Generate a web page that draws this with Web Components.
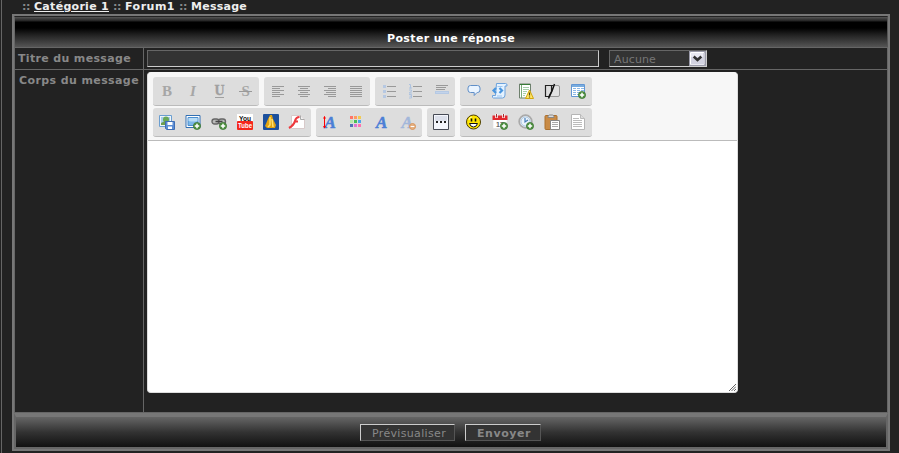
<!DOCTYPE html>
<html lang="fr"><head><meta charset="utf-8"><title>Poster une réponse</title>
<style>
html{background:#222}
body{margin:0;height:453px;overflow:hidden;background:#222;font:11px/14px "DejaVu Sans",Verdana,sans-serif;color:#888}
</style></head><body>
<forum-page></forum-page>
<script>
const define=(name,html,setup)=>customElements.define(name,class extends HTMLElement{
  connectedCallback(){
    if(this.shadowRoot)return;
    this.attachShadow({mode:'open'}).innerHTML=html;
    if(setup)setup.call(this,this.shadowRoot);
  }
});

/* One line of text tracked out to an exact width. */
define('fit-text',`<style>:host{display:inline-block;white-space:pre}span{display:inline-block;white-space:pre}:host(.u) span{text-decoration:underline;text-underline-offset:1px}</style><span><slot></slot></span>`,function(r){
  const w=+this.getAttribute('w'),s=r.querySelector('span'),n=this.textContent.length;
  const d=(w-s.getBoundingClientRect().width)/n;
  s.style.letterSpacing=d+'px';
  this.style.width=w+'px';
});

const serif='font-family="Liberation Serif" ';
const lines=(a,c='#999')=>a.map(([x,y,w])=>`<path d="M${x} ${y}.5h${w}" stroke="${c}"/>`).join('');
const plus=`<circle cx="12" cy="12" r="3.6" fill="#4f9140" stroke="#397431" stroke-width=".7"/><path d="M12 9.8v4.4M9.8 12h4.4" stroke="#fff" stroke-width="1.5"/>`;
const bigA=(x,o=1)=>`<text x="${x}" y="13.5" ${serif}font-size="17" font-weight="bold" font-style="italic" fill="#4c7fd6" stroke="#4c7fd6" stroke-width=".5" opacity="${o}">A</text>`;
const ICONS={
 bold:`<text x="3" y="13" ${serif}font-size="15" font-weight="bold" fill="#a6a6a6">B</text>`,
 italic:`<text x="5" y="13" ${serif}font-size="15" font-weight="bold" font-style="italic" fill="#a6a6a6">I</text>`,
 under:`<text x="3.5" y="11.5" ${serif}font-size="14" fill="#a0a0a0" stroke="#a0a0a0" stroke-width=".3">U</text><path d="M4 14.5h9" stroke="#a0a0a0"/>`,
 strike:`<text x="4.5" y="13" ${serif}font-size="15" font-weight="bold" fill="#a6a6a6">S</text><path d="M2 8.5h13" stroke="#999"/>`,
 left:lines([[2,3,12],[2,5,8],[2,7,12],[2,9,8],[2,11,12],[2,13,8]]),
 center:lines([[2,3,12],[4,5,8],[2,7,12],[4,9,8],[2,11,12],[4,13,8]]),
 right:lines([[2,3,12],[6,5,8],[2,7,12],[4,9,10],[2,11,12],[6,13,8]]),
 just:lines([[2,3,12],[2,5,12],[2,7,12],[2,9,12],[2,11,12],[2,13,12]]),
 ul:lines([[6,3,9],[6,8,9],[6,13,9]])+`<path d="M2 2h3v3H2zM2 7h3v3H2zM2 12h3v3H2z" fill="#b6c8e2"/>`,
 ol:lines([[6,3,9],[6,8,9],[6,13,9]])+`<path d="M2 1.5h1.5v4M2 5h3M2 7h2.5v1.3L2 10h3M2 11.5h2.5v3.500H2M2.500 13.200h2" fill="none" stroke="#adc3e0"/>`,
 hr:lines([[3,2,12],[3,4,10],[3,6,9]])+`<path d="M2 8h14v3H2z" fill="#b5c9e4"/><path d="M3 9.5h12" stroke="#c3d3ea"/>`,
 quote:`<path d="M4.5 2.5h7q2.500 0 2.500 2.500v2q0 2.500-2.500 2.500H11l-2.800 3V9.500H4.500Q2 9.500 2 7V5q0-2.500 2.500-2.500z" fill="#eaf4ff" stroke="#608fc8"/>`,
 code:`<path d="M4.500 .5h9q2 0 1.500 2.500h-2v9q0 3-2.500 3h-9q-1.500 0-1-2.500h3z" fill="#e4f2ff" stroke="#6ca2dc"/><path d="M5.500 3.500h5M5 13h5" stroke="#9fc6ef"/><path d="M4 5L1.500 7.500 4 10M7.500 5L10 7.500 7.500 10" stroke="#4a96df" stroke-width="2.200" fill="none"/>`,
 spoiler:`<path d="M1.500 1h11v14h-11z" fill="#fff" stroke="#6e806d"/><path d="M2 1.500h10" stroke="#397b3a"/><path d="M3.500 2v13" stroke="#79ab79"/><path d="M5 4.500h6M5 6.500h6M5 8.500h4M5 10.500h3M5 12.500h2" stroke="#a6ceaa"/><path d="M11.500 7l4 8.500h-8z" fill="#ffe564" stroke="#d3a70d"/><path d="M11.500 9.500v3m0 1v1" stroke="#56450b" stroke-width="1.200"/>`,
 hide:`<path d="M6.500 2.500H14q1.500 0 1.500 1.500v8q0 1.500-1.500 1.500H6" fill="#e2e2e2" stroke="#999"/><path d="M9 2.500H1.500v11H5M7.500 3v5.500L5 13" fill="none" stroke="#222" stroke-width="1.200"/><path d="M10.500 1L8 8 4.500 15.500" fill="none" stroke="#111" stroke-width="1.500"/>`,
 table:`<path d="M1.500 1.500h13v12h-13z" fill="#fff" stroke="#6296d3"/><path d="M2 3h12" stroke="#78acdf" stroke-width="2"/><path d="M3 5.500h3m1 0h3m1 0h3M3 7.500h3m1 0h3m1 0h3M3 9.500h3m1 0h3M3 11.500h3m1 0h2" stroke="#8cb8e6"/>`+plus,
 host:`<path d="M.5 1.500h12v11H.5z" fill="#eef6fb" stroke="#6b9ed0"/><path d="M2 3h9v8H2z" fill="#a8cdea"/><circle cx="7" cy="5.500" r="3" fill="#69a856"/><path d="M2 11V9q4-3 9 0v2z" fill="#6d9e50"/><path d="M6.500 7.500h9v8H8l-1.500-1z" fill="#5c8ed5" stroke="#3e6db4"/><path d="M8.500 8h5v3h-5zM9 12.500h4V15H9z" fill="#fff"/>`,
 image:`<path d="M1 1.500h14v12H1z" fill="#fff" stroke="#306fb3"/><path d="M3 3.500h10v8H3z" fill="#7db8e9" stroke="#4b8dce"/><path d="M3.500 4h9v3q-4 1-9 0z" fill="#b6dbf5"/>`+plus,
 link:`<rect x="1" y="5" width="7" height="5" rx="2.500" fill="#bbb" stroke="#666" stroke-width="1.400"/><rect x="7.500" y="5" width="7" height="5" rx="2.500" fill="#bbb" stroke="#666" stroke-width="1.400"/><path d="M4.500 7.500h7" stroke="#444" stroke-width="1.500"/>`+plus,
 youtube:`<path d="M0 0h16v7H0z" fill="#fff"/><rect y="7" width="16" height="9" rx="1" fill="#f5271b"/><text x="2" y="6.500" font-family="Liberation Sans" font-weight="bold" font-size="7" textLength="12" lengthAdjust="spacingAndGlyphs" fill="#111">You</text><text x="1" y="14" font-family="Liberation Sans" font-weight="bold" font-size="7" textLength="14" lengthAdjust="spacingAndGlyphs" fill="#fff">Tube</text>`,
 daily:`<rect width="16" height="16" rx="1" fill="#1c509d"/><path d="M7 1h2l1 4 3 6-1 3H4l-2-2 3-7z" fill="#e2a311"/><path d="M7 3v8l-2 2M9 5l1 8" stroke="#ffe270" stroke-width="1.500" fill="none"/>`,
 flash:`<path d="M2.500 1.500h9l4 4v9h-13z" fill="#fff" stroke="#d8caca"/><path d="M11.500 1.500v4h4" fill="#eee" stroke="#aaa"/><path d="M10.500 3Q7 3 6 7T0 14M5 7.500h4" fill="none" stroke="#ee3a3e" stroke-width="2.200"/>`,
 size:bigA(2.5)+`<path d="M2.500 2.500v11" stroke="#f00"/><path d="M1 4.500L2.500 2 4 4.500zM1 12l1.500 2.500L4 12z" fill="#f00"/>`,
 color:[['#ff7568','#ff9b60','#f1cc53'],['#bde7ad','#47bd57','#4da5e9'],['#5070b5','#e073d3','#ff72ae']].map((r,j)=>r.map((c,i)=>`<path d="M${2+i*4} ${2+j*4}h3v3h-3z" fill="${c}"/>`).join('')).join(''),
 font:bigA(2),
 clear:bigA(1.5,.4)+`<circle cx="12.500" cy="12.500" r="3" fill="#e5b181" stroke="#d8955d"/><path d="M10.700 12.500h3.600" stroke="#fff"/>`,
 more:`<path d="M.5 .5h15v15H.5z" fill="#f4f6fc" stroke="#464a55"/><path d="M2 2h12v5H2z" fill="#dce0eb"/><path d="M3 7h2v2H3zM7 7h2v2H7zM11 7h2v2h-2z" fill="#222"/>`,
 smile:`<circle cx="7.500" cy="8" r="7" fill="#ffe500" stroke="#4c3d00"/><path d="M3 6Q3 3 6 3" stroke="#fffbb0" fill="none"/><path d="M5.500 4.500v3M9.500 4.500v3" stroke="#111" stroke-width="1.600"/><path d="M3.500 9.500h8q-1 3.500-4 3.500t-4-3.500z" fill="#fff" stroke="#111"/>`,
 date:`<path d="M1 4h14v10.500H1z" fill="#fff" stroke="#ddd" stroke-width=".6"/><path d="M.5 1.500h15V6H.5z" fill="#e3282e"/><path d="M4.500 0v4M11.500 0v4" stroke="#fff" stroke-width="2.500"/><path d="M4.500 0v3.500M11.500 0v3.500" stroke="#a82a30"/><text x="4" y="12.500" font-family="Liberation Sans" font-size="7" fill="#666">17</text>`+plus,
 time:`<circle cx="7.500" cy="7.500" r="6.300" fill="#eaf2f9" stroke="#aaa" stroke-width="1.800"/><circle cx="7.500" cy="7.500" r="4.500" fill="#eaf3fc" stroke="#91b5d7" stroke-width=".7"/><path d="M7 4v4l3-2" fill="none" stroke="#447cb5" stroke-width="1.200"/>`+plus,
 paste:`<rect x="1" y="1.500" width="12" height="14" rx="1" fill="#c98b46" stroke="#ac702d"/><path d="M4 3.500h6V2L8.500 1h-3L4 2z" fill="#ddd" stroke="#888"/><path d="M6.500 6.500h9v9h-9z" fill="#fff" stroke="#888"/><path d="M8 8.500h6M8 10.500h6M8 12.500h6" stroke="#aaa"/>`,
 doc:`<path d="M1.500 .5h9l4 4v11h-13z" fill="#fff" stroke="#b5b5b5"/><path d="M10.500 .5v4h4" fill="#ddd" stroke="#bbb"/><path d="M3 4.500h6M3 6.500h9M3 8.500h9M3 10.500h9M3 12.500h9" stroke="#bcbcbc"/>`
};
define('tool-button',`<style>:host{display:flex;width:26px;height:100%;align-items:center;justify-content:center}svg{display:block;width:16px;height:16px;overflow:visible}</style><svg viewBox="0 0 16 16"></svg>`,function(r){r.querySelector('svg').innerHTML=ICONS[this.getAttribute('icon')]});
define('tool-group',`<style>:host{display:flex;box-sizing:border-box;height:29px;padding:0 1px;background:#ddd;border-bottom:1px solid #bbb;border-radius:3px}</style>`,function(r){
  for(const n of this.getAttribute('icons').split(' ')){const b=document.createElement('tool-button');b.setAttribute('icon',n);r.append(b)}
});
define('message-editor',`<style>
:host{display:flex;flex-direction:column;box-sizing:border-box;width:591px;height:321px;background:#fff;border-radius:4px;overflow:hidden;border:1px solid #ddd;border-top-color:#f7f7f7}
.bar{box-sizing:border-box;height:68px;background:#f7f7f7;border-bottom:1px solid #bbb;padding:4px 5px;display:flex;flex-direction:column;gap:2px}
.row{display:flex;gap:5px}
.area{flex:1;display:flex;justify-content:flex-end;align-items:flex-end;padding:0 1px 1px 0}
svg{display:block;width:7px;height:7px}
</style><div class="bar"><div class="row"><tool-group icons="bold italic under strike"></tool-group><tool-group icons="left center right just"></tool-group><tool-group icons="ul ol hr"></tool-group><tool-group icons="quote code spoiler hide table"></tool-group></div>
<div class="row"><tool-group icons="host image link youtube daily flash"></tool-group><tool-group icons="size color font clear"></tool-group><tool-group icons="more"></tool-group><tool-group icons="smile date time paste doc"></tool-group></div></div>
<div class="area"><svg viewBox="0 0 7 7"><path d="M0 7L7 0M2.500 7L7 2.500M5 7l2-2" stroke="#555" stroke-width=".9"/></svg></div>`);
define('text-field',`<style>:host{display:block;box-sizing:border-box;width:452px;height:17px;background:#333;border:1px solid #666;border-right-color:#ccc;border-bottom-color:#ccc}</style>`);
define('icon-select',`<style>:host{display:flex;justify-content:space-between;box-sizing:border-box;width:98px;height:17px;background:#333;border:1px solid #666;border-right-color:#ccc;border-bottom-color:#ccc;color:#777;line-height:17px;padding-left:4px}svg{display:block;width:17px;height:15px}</style><slot></slot><svg viewBox="0 0 17 15"><rect width="17" height="15" fill="#9999a8"/><rect x="1" y="1" width="14.500" height="13" rx="1" fill="#fff"/><rect x="2" y="2" width="13" height="11.500" fill="#d2d2e0"/><path d="M2 2h12v4H2z" fill="#e9e9f2"/><path d="M4.700 5.500l3.800 3.500 3.800-3.500" fill="none" stroke="#333" stroke-width="2.500"/></svg>`);
define('form-button',`<style>:host{display:block;box-sizing:border-box;height:17px;background:#333;border:1px solid #ccc;border-right-color:#555;border-bottom-color:#555;color:#888;line-height:17px;padding-left:11px}:host([primary]){font-weight:bold}</style><slot></slot>`);
define('bread-crumb',`<style>:host{display:flex;gap:4px;height:14px;padding-left:20px;font-weight:bold;line-height:13px;color:#eee;white-space:pre}.s{color:#888}</style><fit-text class="s" w="8">::</fit-text><fit-text class="u" w="75">Catégorie 1</fit-text><fit-text class="s" w="8">::</fit-text><fit-text w="50">Forum1</fit-text><fit-text class="s" w="8">::</fit-text><fit-text w="56">Message</fit-text>`);
define('reply-form',`<style>
:host{display:flex;flex-direction:column;box-sizing:border-box;width:878px;height:437px;margin-left:10px;border:2px solid #777}
header{box-sizing:border-box;height:31px;border:1px solid #444;border-left-color:#666;border-right-color:#555;border-top-color:#222;border-bottom:0;background:linear-gradient(#555 0,#222 4px,#000 5px,#000 11px,#222 18px,#555 30px);color:#fff;font-weight:bold;display:flex;padding:15px 0 0 372px;line-height:14px}
main{height:366px;box-sizing:border-box;border:1px solid #666;display:grid;grid-template:21px 342px/128px 1fr;gap:1px;background:#666}
main>div{background:#222;font-weight:bold}
.label{padding:3px 0 0 3px;line-height:15px}.body{padding-left:4px}
main>.fields{display:flex;gap:10px;padding:2px 0 0 3px;font-weight:normal}
.editor{padding:2px 0 0 3px}
footer{flex:1;box-sizing:border-box;border:2px solid #666;border-top:4px solid #777;border-width:4px 2px 2px;background:linear-gradient(#666,#333 50%,#111) padding-box;display:flex;gap:10px;padding:7px 0 0 344px}
</style><header><fit-text w="128">Poster une réponse</fit-text></header>
<main><div class="label"><fit-text w="113">Titre du message</fit-text></div><div class="fields"><text-field></text-field><icon-select><fit-text w="42">Aucune</fit-text></icon-select></div>
<div class="label body"><fit-text w="120">Corps du message</fit-text></div><div class="editor"><message-editor></message-editor></div></main>
<footer><form-button style="width:95px"><fit-text w="74">Prévisualiser</fit-text></form-button><form-button primary style="width:76px"><fit-text w="54">Envoyer</fit-text></form-button></footer>`);
define('forum-page',`<style>:host{display:block;box-sizing:border-box;height:453px;margin-left:1px;border-left:1px solid #666}</style><bread-crumb></bread-crumb><reply-form></reply-form>`);
</script></body></html>
